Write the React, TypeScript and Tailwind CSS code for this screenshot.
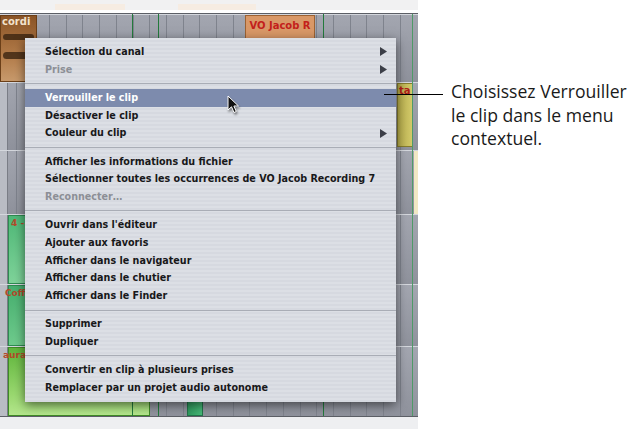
import React from 'react';

type Item = { label?: string; sep?: boolean; sub?: boolean; disabled?: boolean; active?: boolean };

const items: Item[] = [
  { label: 'Sélection du canal', sub: true },
  { label: 'Prise', sub: true, disabled: true },
  { sep: true },
  { label: 'Verrouiller le clip', active: true },
  { label: 'Désactiver le clip' },
  { label: 'Couleur du clip', sub: true },
  { sep: true },
  { label: 'Afficher les informations du fichier' },
  { label: 'Sélectionner toutes les occurrences de VO Jacob Recording 7' },
  { label: 'Reconnecter…', disabled: true },
  { sep: true },
  { label: "Ouvrir dans l'éditeur" },
  { label: 'Ajouter aux favoris' },
  { label: 'Afficher dans le navigateur' },
  { label: 'Afficher dans le chutier' },
  { label: 'Afficher dans le Finder' },
  { sep: true },
  { label: 'Supprimer' },
  { label: 'Dupliquer' },
  { sep: true },
  { label: 'Convertir en clip à plusieurs prises' },
  { label: 'Remplacer par un projet audio autonome' },
];

const trackBg =
  'bg-[repeating-linear-gradient(90deg,transparent_0px,transparent_15.7px,#7f838d_15.7px,#7f838d_16.7px),linear-gradient(180deg,#a3a6b0,#8f929c)]';

function Track({ h, children }: { h: string; children?: React.ReactNode }) {
  return (
    <div className={`relative ${h} border-t border-[#d4d7dd] ${trackBg}`}>
      <div className="absolute left-0 top-0 bottom-0 w-[8px] bg-[#b9bcc4] border-r border-[#7a7d86]" />
      {children}
    </div>
  );
}

function Cursor() {
  return (
    <svg width="14" height="20" viewBox="0 0 14 20" className="drop-shadow-[1px_2px_1px_rgba(0,0,0,0.45)]">
      <path d="M1 1 L1 15 L4.5 11.8 L7 17.5 L9.3 16.5 L6.9 11 L11.5 11 Z" fill="#111" stroke="#fff" strokeWidth="1" />
    </svg>
  );
}

export default function App() {
  return (
    <div className="w-[631px] h-[429px] bg-white relative overflow-hidden font-['DejaVu_Sans',sans-serif]">
      {/* timeline screenshot */}
      <div className="absolute left-0 top-0 w-[418px] h-[429px] flex flex-col bg-[#eeeff1]">
        <div className="h-[10px] bg-[#f1f1f2] relative">
          <div className="absolute left-[55px] top-[4px] w-[70px] h-[6px] bg-[#f6ece2]" />
          <div className="absolute left-[178px] top-[4px] w-[78px] h-[6px] bg-[#f6ece2]" />
        </div>
        <div className="h-[3px] bg-white" />
        <div className="h-[1px] bg-[#5c5f66]" />
        <Track h="h-[68px]">
          <div className="absolute left-0 top-0 w-[37px] h-[67px] bg-[linear-gradient(180deg,#8a5426,#b27b49_60%,#c89a6c)] border border-[#6b3f18] overflow-hidden">
            <div className="text-[10px] font-bold text-[#f3e2cc] leading-[12px] pl-[1px]">cordi</div>
            <div className="mt-[6px] h-[6px] mx-[2px] bg-[#3b2410] rounded-full opacity-80" />
            <div className="mt-[12px] h-[7px] mx-[2px] bg-[#3b2410] rounded-full opacity-80" />
          </div>
          <div className="absolute left-[245px] top-0 w-[70px] h-[67px] bg-[#d99867] border border-[#9c6232]">
            <div className="text-[10px] font-bold text-[#c3201b] leading-[20px] text-center">VO Jacob R</div>
          </div>
        </Track>
        <Track h="h-[68px]">
          <div className="absolute left-[397px] top-0 w-[16px] h-[64px] bg-[linear-gradient(90deg,#b3a94a,#d3ca6a)] border border-[#857c2c]">
            <div className="text-[10px] font-bold text-[#b02018] leading-[14px] pl-[1px]">ta</div>
          </div>
        </Track>
        <Track h="h-[64px]">
          <div className="absolute left-[414px] top-0 w-[4px] h-[63px] bg-[#f1e8c4]" />
        </Track>
        <Track h="h-[70px]">
          <div className="absolute left-[8px] top-0 w-[385px] h-[69px] bg-[linear-gradient(180deg,#4fb877,#7fd39a)] border border-[#2f8a52]">
            <div className="text-[9px] font-bold text-[#b44a2a] leading-[14px] pl-[2px]">4 - ]</div>
          </div>
        </Track>
        <Track h="h-[62px]">
          <div className="absolute left-[8px] top-0 w-[385px] h-[61px] bg-[linear-gradient(180deg,#46ae6e,#6fcb8d)] border border-[#2f8a52]">
            <div className="text-[9px] font-bold text-[#b44a2a] leading-[14px] -ml-[4px]">Coffi</div>
          </div>
        </Track>
        <Track h="h-[70px]">
          <div className="absolute left-[8px] top-0 w-[142px] h-[69px] bg-[linear-gradient(180deg,#5fb53c,#9ad870_70%,#b4e68c)] border border-[#3f8a26]">
            <div className="text-[9px] font-bold text-[#b44a2a] leading-[14px] -ml-[6px]">aura</div>
          </div>
          <div className="absolute left-[187px] top-0 w-[16px] h-[69px] bg-[linear-gradient(90deg,#2f9a5e,#46b877)] border border-[#22744a]" />
        </Track>
        <div className="h-[1px] bg-[#5c5f66]" />
        <div className="flex-1 bg-[#eeeff1]" />
        {/* markers */}
        <div className="absolute left-[132px] top-[14px] w-[1px] h-[402px] bg-[#237a3c]" />
        <div className="absolute left-[158px] top-[14px] w-[1px] h-[402px] bg-[#237a3c]" />
        <div className="absolute left-[323px] top-[14px] w-[1px] h-[402px] bg-[#237a3c]" />
        <div className="absolute left-[412px] top-[14px] w-[1px] h-[402px] bg-[#4f9a68]" />
      </div>

      {/* context menu */}
      <div className="absolute left-[25px] top-[38px] w-[371px] pt-[5px] pb-[5px] bg-[repeating-linear-gradient(180deg,#dcdfe5_0px,#dcdfe5_2px,#d6d9e0_2px,#d6d9e0_4px)] shadow-[0_3px_10px_rgba(0,0,0,0.55)]">
        {items.map((it, i) =>
          it.sep ? (
            <div key={i} className="h-[10.6px] flex items-center">
              <div className="w-full h-[1px] bg-[#a9adb6]" />
            </div>
          ) : (
            <div
              key={i}
              className={`h-[17.7px] flex items-center pl-[20px] pr-[9px] text-[9.6px] font-bold leading-none ${
                it.active ? 'bg-[#7d8bad] text-white' : it.disabled ? 'text-[#8c8f96]' : 'text-[#18181a]'
              }`}
            >
              <span className="flex-1 whitespace-nowrap">{it.label}</span>
              {it.sub && (
                <svg width="7" height="9" viewBox="0 0 7 9">
                  <path d="M0 0 L7 4.5 L0 9 Z" fill="#3c3f48" />
                </svg>
              )}
            </div>
          )
        )}
      </div>

      {/* mouse pointer */}
      <div className="absolute left-[227px] top-[95px]">
        <Cursor />
      </div>

      {/* callout */}
      <div className="absolute left-[384px] top-[94px] w-[59px] h-[1px] bg-black" />
      <div className="absolute left-[451px] top-[80px] text-[17.6px] leading-[23.5px] text-[#1a1a1a] font-['Open_Sans',sans-serif]">
        Choisissez Verrouiller
        <br />
        le clip dans le menu
        <br />
        contextuel.
      </div>
    </div>
  );
}
